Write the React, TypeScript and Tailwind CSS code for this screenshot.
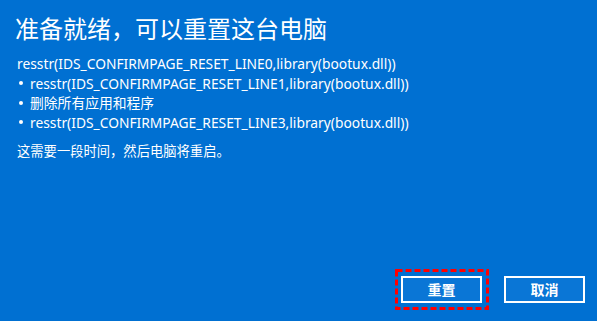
const FONT = { fontFamily: '"Segoe UI", "Noto Sans", "Noto Sans CJK SC", sans-serif' };

const LINES = [
  "resstr(IDS_CONFIRMPAGE_RESET_LINE1,library(bootux.dll))",
  "删除所有应用和程序",
  "resstr(IDS_CONFIRMPAGE_RESET_LINE3,library(bootux.dll))",
];

export default function App() {
  return (
    <div className="w-[597px] h-[321px] bg-[#0070d2] text-white flex flex-col overflow-hidden" style={FONT}>
      <h1 className="pl-[15px] pt-[14px] text-[24px] leading-[30px] font-normal">准备就绪，可以重置这台电脑</h1>

      <div className="pl-[17px] pt-[10px] text-[13.8px] leading-[19.5px]">
        <div>resstr(IDS_CONFIRMPAGE_RESET_LINE0,library(bootux.dll))</div>
        {LINES.map((l) => (
          <div key={l} className="flex items-center">
            <span className="w-[13px] flex pl-[2px]">
              <span className="w-[4px] h-[4px] rounded-full bg-white" />
            </span>
            <span>{l}</span>
          </div>
        ))}
        <div className="mt-[10px] text-[13.3px]">这需要一段时间，然后电脑将重启。</div>
      </div>

      <div className="mt-auto flex justify-end gap-[22px] pr-[12px] pb-[18px]">
        <div className="relative">
          <button type="button" className="w-[81px] h-[27px] border-2 border-white bg-[#0a76d6] text-[14px] font-bold">
            重置
          </button>
          <svg className="absolute -left-[6px] -top-[7px] pointer-events-none" width="94" height="41" aria-hidden>
            <rect x="1.5" y="1.5" width="91" height="38" fill="none" stroke="#ff0000" strokeWidth="3" strokeDasharray="6 3" />
          </svg>
        </div>
        <button type="button" className="w-[81px] h-[27px] border-2 border-white bg-[#0a76d6] text-[14px] font-bold">
          取消
        </button>
      </div>
    </div>
  );
}
